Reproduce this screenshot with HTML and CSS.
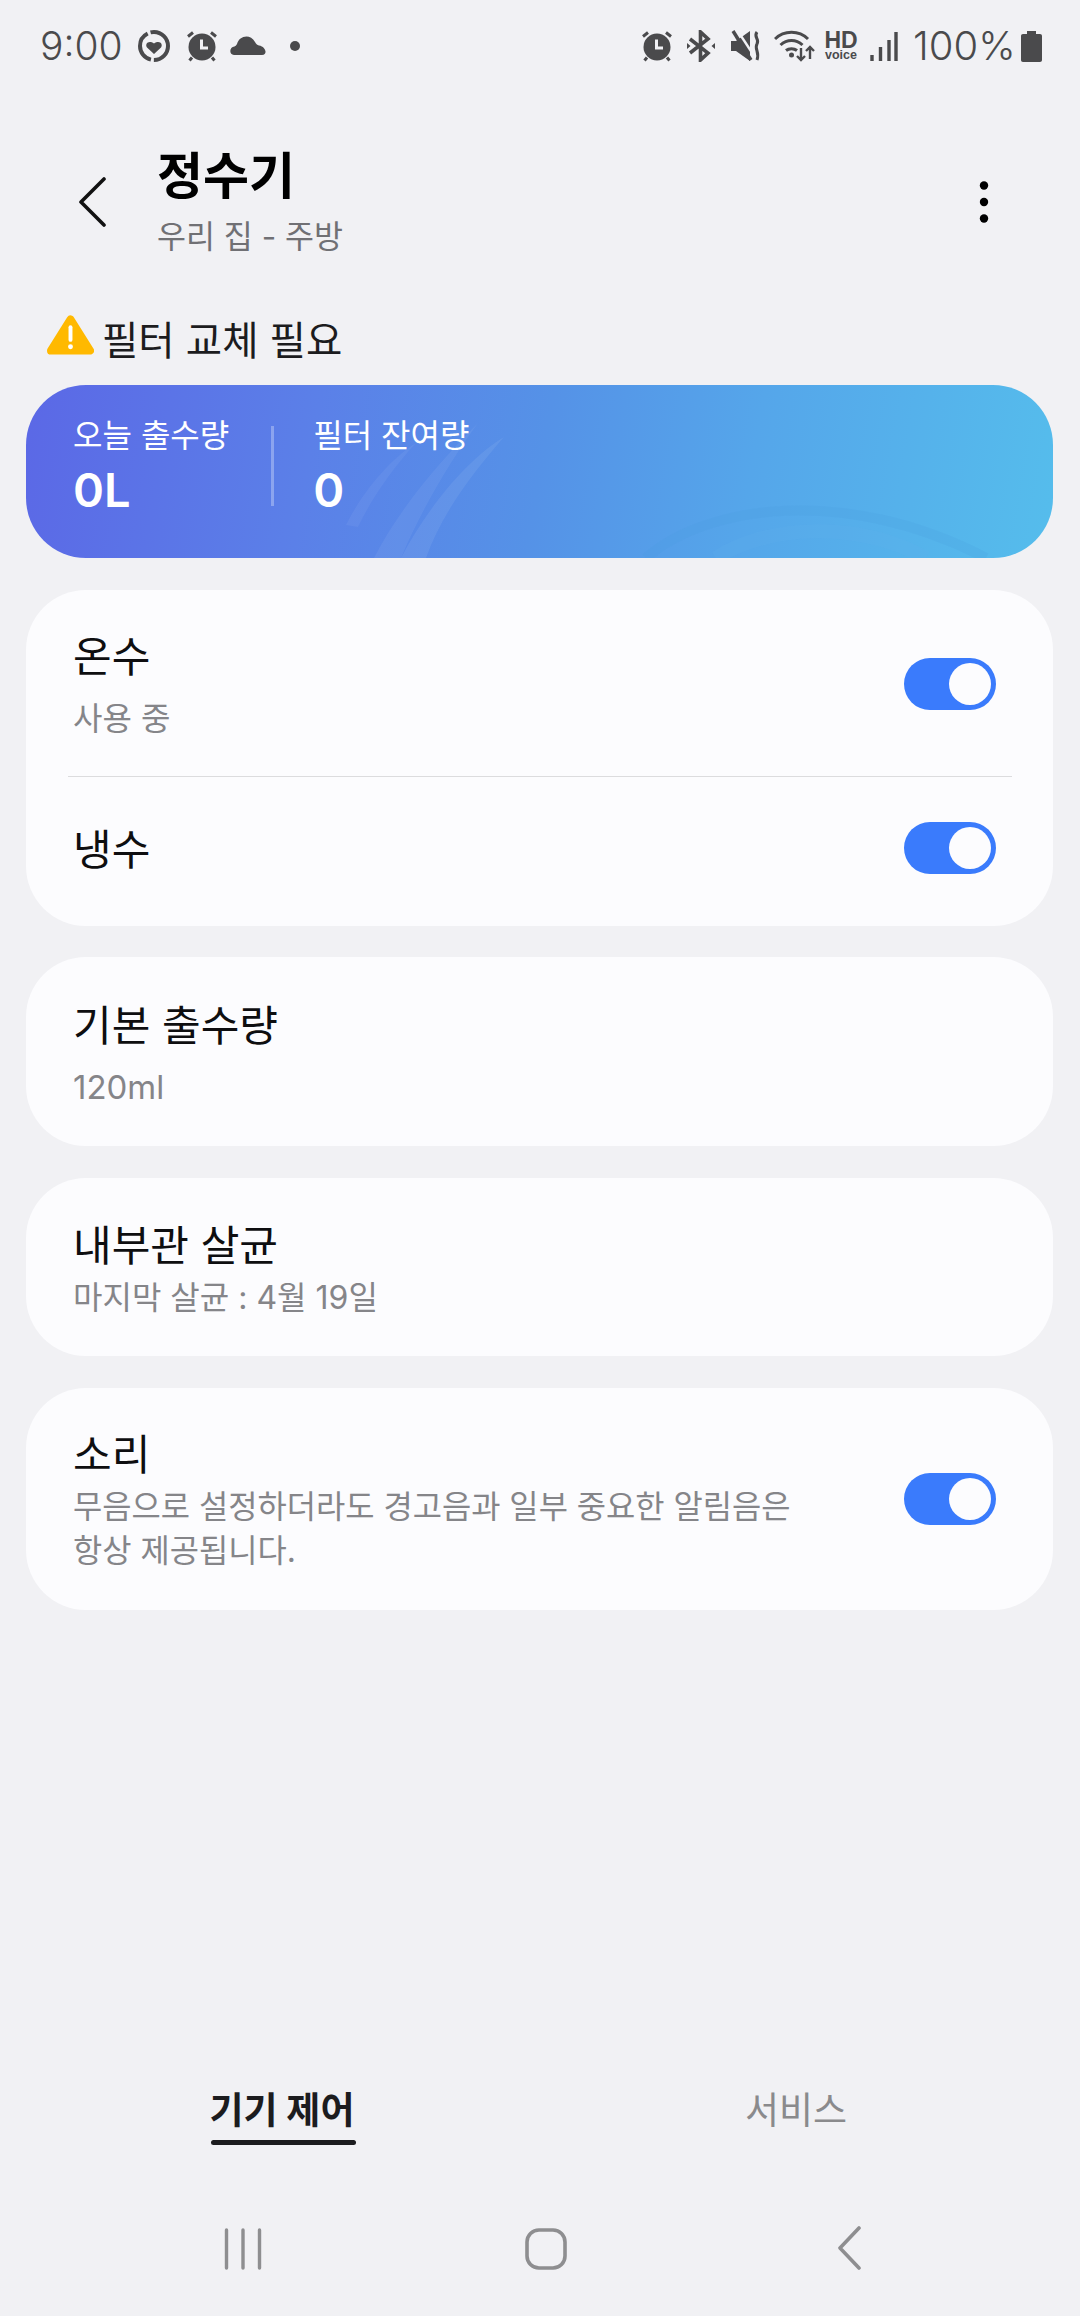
FILE: index.html
```html
<!DOCTYPE html>
<html lang="ko">
<head>
    <meta charset="UTF-8">
    <meta name="viewport" content="width=device-width, initial-scale=1.0">
    <title>정수기</title>
    <link rel="stylesheet" href="styles.css">
</head>
<body>
    <svg class="defs" width="0" height="0">
        <symbol id="alarm" viewBox="0 0 32 32">
            <circle cx="16" cy="17" r="13.5" fill="#4a4a4c"/>
            <path d="M2 6.500 7 2.500M30 6.500 25 2.500M6 27.500 3.500 30.500M26 27.500 28.500 30.500" stroke="#4a4a4c" stroke-width="3" fill="none"/>
            <path d="M15.500 9.500V18H22" stroke="#f1f1f4" stroke-width="3" fill="none"/>
        </symbol>
        <symbol id="toggle" viewBox="0 0 92 52">
            <rect width="92" height="52" rx="26" fill="#3a7bfc"/>
            <circle cx="66" cy="26" r="21" fill="#fcfcfe"/>
        </symbol>
    </svg>

    <div class="app">
        <div class="status-bar">
            <span class="clock">9:00</span>
            <svg class="ic ic-ring" viewBox="0 0 34 34">
                <circle cx="17" cy="17" r="14" fill="none" stroke="#4a4a4c" stroke-width="4" stroke-dasharray="22 3 34 3 26 3"/>
                <path d="M17 25 10 18.500C7.500 15 11.500 10.500 17 14.500 22.500 10.500 26.500 15 24 18.500Z" fill="#4a4a4c"/>
            </svg>
            <svg class="ic ic-alarm"><use href="#alarm"/></svg>
            <svg class="ic ic-cloud" viewBox="0 0 36 20">
                <path d="M4 20C-1 20-1 12 4.500 11.500 5.500 11 6 10.500 7 9 9 1 20-2 25 7 26 9 27 10 29 10.500 36 11.500 38 20 32 20Z" fill="#4a4a4c"/>
            </svg>
            <span class="dot"></span>
            <span class="spacer"></span>
            <svg class="ic ic-alarm2"><use href="#alarm"/></svg>
            <svg class="ic ic-bt" viewBox="0 0 28 32">
                <path d="M3 9 21 23 13.500 30V2L21 9 3 23" fill="none" stroke="#4a4a4c" stroke-width="3.600"/>
                <path d="M0 13 3.500 16 0 19ZM28 13 24.500 16 28 19Z" fill="#4a4a4c"/>
            </svg>
            <svg class="ic ic-mute" viewBox="0 0 30 32">
                <path d="M0 11H5L19 1V31L5 21H0Z" fill="#4a4a4c"/>
                <path d="M5.500 -1 24.500 28" stroke="#f1f1f4" stroke-width="2.400"/>
                <path d="M2 1 20 30" stroke="#4a4a4c" stroke-width="3.400"/>
                <path d="M26 2C22 7 29 9 26 14 23 19 29 22 26 30" fill="none" stroke="#4a4a4c" stroke-width="3"/>
            </svg>
            <svg class="ic ic-wifi" viewBox="0 0 42 32">
                <path d="M1 9C10 0 25 0 34 9M6.500 15C13 9 22 9 28.500 15M12 20.500C15 18 20 18 23 20.500" fill="none" stroke="#4a4a4c" stroke-width="3"/>
                <circle cx="17.500" cy="25" r="2.500" fill="#4a4a4c"/>
                <path d="M27 18V30M23 26 27 30 31 26M36 29V17M32 21 36 17 40 21" fill="none" stroke="#4a4a4c" stroke-width="2.400"/>
            </svg>
            <span class="hd"><b>HD</b><i>voice</i></span>
            <svg class="ic ic-signal" viewBox="0 0 28 30">
                <path d="M2 24V30M10.500 16V30M19 9V30M26 1V30" stroke="#4a4a4c" stroke-width="3.400" fill="none"/>
            </svg>
            <span class="battery-pct">100%</span>
            <svg class="ic ic-battery" viewBox="0 0 21 31">
                <path d="M6 0H15V3H19C20.200 3 21 3.800 21 5V29C21 30.200 20.200 31 19 31H2C.8 31 0 30.200 0 29V5C0 3.800 .8 3 2 3H6Z" fill="#4a4a4c"/>
            </svg>
        </div>

        <header class="top-bar">
            <svg class="back" viewBox="0 0 28 50">
                <path d="M26 2 3 25 26 48" fill="none" stroke="#111" stroke-width="3.600" stroke-linecap="round" stroke-linejoin="round"/>
            </svg>
            <div class="top-title">
                <h1>정수기</h1>
                <p>우리 집 - 주방</p>
            </div>
            <svg class="more" viewBox="0 0 10 42">
                <circle cx="5" cy="4.500" r="4.200"/>
                <circle cx="5" cy="21" r="4.200"/>
                <circle cx="5" cy="37.500" r="4.200"/>
            </svg>
        </header>

        <div class="warning">
            <svg class="warning-icon" viewBox="0 0 48 42">
                <path d="M24 5 44 37H4Z" fill="#ffb900" stroke="#ffb900" stroke-width="8" stroke-linejoin="round"/>
                <path d="M24 13V26" stroke="#fff" stroke-width="4" stroke-linecap="round"/>
                <circle cx="24" cy="33" r="2.500" fill="#fff"/>
            </svg>
            <span>필터 교체 필요</span>
        </div>

        <section class="summary">
            <svg class="summary-bg" viewBox="0 0 1027 173" preserveAspectRatio="none">
                <path d="M320 140C340 100 370 70 390 58 365 85 345 115 332 142Z" fill="#fff" opacity=".05"/>
                <path d="M348 173C375 120 420 70 452 38 425 75 395 125 375 173Z" fill="#fff" opacity=".06"/>
                <path d="M375 173C400 125 440 75 478 52 445 90 415 130 400 173Z" fill="#fff" opacity=".07"/>
                <path d="M620 173C680 120 820 100 960 173" fill="none" stroke="#4a9ae0" stroke-width="10" opacity=".18"/>
                <path d="M690 173C740 140 830 135 900 173" fill="none" stroke="#62b4ee" stroke-width="14" opacity=".18"/>
            </svg>
            <div class="stat">
                <span class="stat-label">오늘 출수량</span>
                <strong class="stat-value">0L</strong>
            </div>
            <span class="stat-divider"></span>
            <div class="stat">
                <span class="stat-label">필터 잔여량</span>
                <strong class="stat-value">0</strong>
            </div>
        </section>

        <section class="card card-water">
            <div class="row row-hot">
                <div class="row-text">
                    <h2>온수</h2>
                    <p class="sub-hot">사용 중</p>
                </div>
                <svg class="toggle"><use href="#toggle"/></svg>
            </div>
            <div class="row row-cold">
                <div class="row-text">
                    <h2>냉수</h2>
                </div>
                <svg class="toggle"><use href="#toggle"/></svg>
            </div>
        </section>

        <section class="card card-amount">
            <h2>기본 출수량</h2>
            <p>120ml</p>
        </section>

        <section class="card card-clean">
            <h2>내부관 살균</h2>
            <p>마지막 살균 : 4월 19일</p>
        </section>

        <section class="card card-sound">
            <div class="row-text">
                <h2>소리</h2>
                <p>무음으로 설정하더라도 경고음과 일부 중요한 알림음은<br>항상 제공됩니다.</p>
            </div>
            <svg class="toggle"><use href="#toggle"/></svg>
        </section>

        <nav class="tabs">
            <a class="tab tab-active">기기 제어</a>
            <a class="tab">서비스</a>
        </nav>

        <div class="nav-bar">
            <svg class="nav-recent" viewBox="0 0 38 42">
                <path d="M2.500 2V40M19 2V40M35.500 2V40" stroke="#8e8e90" stroke-width="3.400" stroke-linecap="round"/>
            </svg>
            <svg class="nav-home" viewBox="0 0 42 42">
                <rect x="2" y="2" width="38" height="38" rx="12" fill="none" stroke="#8e8e90" stroke-width="3.600"/>
            </svg>
            <svg class="nav-back" viewBox="0 0 24 44">
                <path d="M22 2 3 22 22 42" fill="none" stroke="#8e8e90" stroke-width="3.600" stroke-linecap="round" stroke-linejoin="round"/>
            </svg>
        </div>
    </div>
</body>
</html>
```

FILE: styles.css
```css
:root {
    --page-bg: #f1f1f4;
    --card-bg: #fcfcfe;
    --text-main: #1c1c1e;
    --text-sub: #858589;
    --status: #4a4a4c;
}
* {
    box-sizing: border-box;
}
body {
    margin: 0;
    padding: 0;
    font-family: Inter, "Noto Sans CJK KR", sans-serif;
    background-color: var(--page-bg);
    color: var(--text-main);
}
h1, h2, p {
    margin: 0;
    font-weight: 400;
}
.defs {
    position: absolute;
}
.app {
    width: 1080px;
    height: 2316px;
    display: flex;
    flex-direction: column;
    overflow: hidden;
}

/* Status bar */
.status-bar {
    height: 92px;
    flex: none;
    display: flex;
    align-items: center;
    padding: 0 38px 0 40px;
    color: var(--status);
    font-weight: 300;
}
.ic {
    flex: none;
    display: block;
}
.clock {
    width: 80px;
    font-size: 39px;
    line-height: 46px;
    white-space: nowrap;
}
.ic-ring { width: 34px; height: 34px; margin-left: 17px; }
.ic-alarm { width: 32px; height: 32px; margin-left: 15px; }
.ic-cloud { width: 36px; height: 20px; margin-left: 12px; margin-bottom: 2px; }
.dot {
    width: 10px;
    height: 10px;
    border-radius: 50%;
    background-color: var(--status);
    margin-left: 24px;
}
.spacer { flex: 1; }
.ic-alarm2 { width: 32px; height: 32px; }
.ic-bt { width: 28px; height: 32px; margin-left: 14px; }
.ic-mute { width: 30px; height: 32px; margin-left: 16px; }
.ic-wifi { width: 42px; height: 32px; margin-left: 13px; }
.hd {
    width: 36px;
    margin-left: 7px;
    display: flex;
    flex-direction: column;
    align-items: center;
    font-family: "Liberation Sans", sans-serif;
}
.hd b {
    font-size: 23px;
    line-height: 18px;
    font-weight: 700;
}
.hd i {
    font-style: normal;
    font-weight: 700;
    font-size: 12.5px;
    line-height: 13px;
}
.ic-signal { width: 28px; height: 30px; margin-left: 11px; }
.battery-pct {
    width: 100px;
    margin-left: 15px;
    font-size: 40px;
    line-height: 46px;
    white-space: nowrap;
}
.ic-battery { width: 21px; height: 31px; margin-left: 8px; }

/* Title area */
.top-bar {
    flex: none;
    display: flex;
    align-items: flex-start;
    padding: 54px 0 0 78px;
}
.back {
    width: 28px;
    height: 50px;
    margin-top: 31px;
}
.top-title {
    margin-left: 51px;
    width: 600px;
    height: 114px;
}
.top-title h1 {
    font-size: 50px;
    line-height: 60px;
    font-weight: 700;
    color: #000;
}
.top-title p {
    margin-top: 8px;
    font-size: 31.5px;
    line-height: 46px;
    color: #707074;
}
.more {
    width: 10px;
    height: 42px;
    margin-left: 222px;
    margin-top: 35px;
    fill: #000;
}
.warning {
    flex: none;
    display: flex;
    align-items: center;
    height: 50px;
    margin-top: 55px;
    padding-left: 47px;
    font-size: 39.5px;
}
.warning span {
    margin-top: -5px;
}
.warning-icon {
    width: 47px;
    height: 42px;
    margin-right: 8px;
    margin-bottom: 10px;
}

/* Gradient summary */
.summary {
    flex: none;
    position: relative;
    overflow: hidden;
    height: 173px;
    margin: 20px 27px 0 26px;
    padding: 31px 0 0 47px;
    border-radius: 60px;
    display: flex;
    align-items: flex-start;
    color: #fff;
    background: linear-gradient(100deg, #5b68e6 0%, #5b80e8 28%, #5592e7 50%, #55a6ea 70%, #55bdec 100%);
}
.summary-bg {
    position: absolute;
    top: 0;
    left: 0;
    width: 100%;
    height: 100%;
}
.stat {
    position: relative;
    display: flex;
    flex-direction: column;
}
.stat-label {
    font-size: 32px;
    line-height: 40px;
    white-space: nowrap;
}
.stat-value {
    font-size: 47px;
    line-height: 60px;
    font-weight: 600;
    margin-top: 4px;
}
.stat-divider {
    position: relative;
    width: 3px;
    height: 80px;
    margin: 10px 39px 0 42px;
    background-color: rgba(255, 255, 255, 0.3);
}

/* Cards */
.card {
    flex: none;
    margin: 32px 27px 0 26px;
    padding: 0 57px 0 47px;
    border-radius: 60px;
    background-color: var(--card-bg);
}
.card h2 {
    font-size: 42px;
    line-height: 56px;
    color: #0e0e10;
}
.card p {
    font-size: 32px;
    color: var(--text-sub);
}
.row {
    display: flex;
    align-items: center;
    justify-content: space-between;
}
.toggle {
    flex: none;
    width: 92px;
    height: 52px;
}
.card-water {
    height: 336px;
}
.row-hot {
    position: relative;
    height: 187px;
}
.row-hot::after {
    content: "";
    position: absolute;
    left: -5px;
    right: -16px;
    bottom: 0;
    height: 1px;
    background-color: #dcdcde;
}
.row-hot .row-text,
.row-cold .row-text {
    padding-top: 4px;
}
.row-cold {
    height: 141px;
}
.sub-hot {
    line-height: 46px;
    margin-top: 11px;
}
.card-amount {
    height: 189px;
    margin-top: 31px;
    padding-top: 41px;
}
.card-amount p {
    font-size: 33px;
    line-height: 46px;
    margin-top: 10px;
}
.card-clean {
    height: 178px;
    padding-top: 40px;
}
.card-clean p {
    line-height: 46px;
    margin-top: 1px;
}
.card-sound {
    height: 222px;
    padding-top: 39px;
    display: flex;
    justify-content: space-between;
}
.card-sound p {
    font-size: 31.8px;
    line-height: 44px;
    margin-top: 2px;
    white-space: nowrap;
}
.card-sound .toggle {
    margin-top: 46px;
}

/* Bottom tabs + system nav */
.tabs {
    flex: none;
    display: flex;
    margin-top: auto;
    height: 80px;
}
.tab {
    position: relative;
    width: 464px;
    padding-top: 13px;
    text-align: center;
    font-size: 37px;
    line-height: 56px;
    color: #8a8a8c;
}
.tab:first-child {
    width: 564px;
}
.tab-active {
    font-weight: 700;
    color: var(--text-main);
}
.tab-active::after {
    content: "";
    position: absolute;
    left: 211px;
    width: 145px;
    bottom: 5px;
    height: 5px;
    border-radius: 3px;
    background-color: var(--text-main);
}
.nav-bar {
    flex: none;
    height: 166px;
    padding-bottom: 46px;
    display: flex;
    align-items: flex-end;
}
.nav-recent {
    width: 38px;
    height: 42px;
    margin-left: 224px;
}
.nav-home {
    width: 42px;
    height: 42px;
    margin-left: 263px;
}
.nav-back {
    width: 24px;
    height: 44px;
    margin-left: 270px;
}
```
